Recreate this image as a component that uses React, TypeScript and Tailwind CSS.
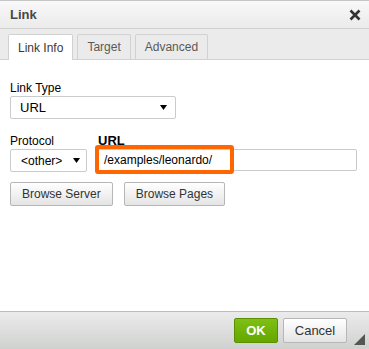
import React from "react";

const font = { fontFamily: '"Liberation Sans", Arial, sans-serif' };

function Tab({ label, active }: { label: string; active?: boolean }) {
  return (
    <div
      className={
        "px-[9px] flex items-center border border-b-0 border-[#d1d1d1] rounded-t-[2px] text-[12px] " +
        (active ? "bg-white text-[#383838] h-[26px] -mb-px" : "bg-[#ebebeb] text-[#595959] h-[25px]")
      }
    >
      {label}
    </div>
  );
}

function Btn({ label }: { label: string }) {
  return (
    <button className="h-[24px] px-[11px] border border-[#b6b6b6] rounded-[2px] bg-gradient-to-b from-white to-[#e4e4e4] text-[12px] text-[#333]">
      {label}
    </button>
  );
}

function Arrow() {
  return (
    <svg width="7" height="5" viewBox="0 0 7 5">
      <path d="M0 0 L7 0 L3.5 5 Z" fill="#000" />
    </svg>
  );
}

export default function App() {
  return (
    <div style={font} className="w-[369px] h-[349px] flex flex-col bg-white overflow-hidden">
      {/* title */}
      <div className="h-[29px] shrink-0 border-t border-[#c6c6c6] border-b border-b-[#d1d1d1] bg-gradient-to-b from-[#f8f8f8] to-[#ebebeb] flex items-center justify-between pl-[10px] pr-[8px]">
        <span className="text-[13px] font-bold text-[#474747]">Link</span>
        <svg width="12" height="12" viewBox="0 0 12 12">
          <path d="M1.5 1.5 L10.5 10.5 M10.5 1.5 L1.5 10.5" stroke="#333" strokeWidth="2.6" />
        </svg>
      </div>
      {/* tabs */}
      <div className="h-[31px] shrink-0 bg-[#ebebeb] border-b border-[#d1d1d1] flex items-end gap-[4px] pl-[8px]">
        <Tab label="Link Info" active />
        <Tab label="Target" />
        <Tab label="Advanced" />
      </div>
      {/* body */}
      <div className="flex-1 pl-[10px] pr-[12px] pt-[20px] text-[12px] text-black">
        <div className="leading-[16px]">Link Type</div>
        <div className="w-[166px] h-[23px] border border-[#c9cccf] rounded-[2px] flex items-center justify-between pl-[9px] pr-[8px]">
          <span className="text-[13px]">URL</span>
          <Arrow />
        </div>
        <div className="mt-[14px] flex gap-[9px]">
          <div>
            <div className="leading-[16px]">Protocol</div>
            <div className="w-[77px] h-[23px] border border-[#c9cccf] rounded-[2px] flex items-center justify-between pl-[10px] pr-[6px]">
              <span className="text-[12px]">&lt;other&gt;</span>
              <Arrow />
            </div>
          </div>
          <div className="flex-1 relative">
            <div className="leading-[16px] font-bold text-[13px] pl-[2px]">URL</div>
            <div className="h-[22px] border border-[#c9cccf] rounded-[2px] flex items-center pl-[7px] text-[12px]">
              /examples/leonardo/
            </div>
            <div className="absolute left-[-1px] top-[12px] w-[139px] h-[29px] border-[4px] border-[#ff6600] rounded-[3px]" />
          </div>
        </div>
        <div className="mt-[10px] flex gap-[11px]">
          <Btn label="Browse Server" />
          <Btn label="Browse Pages" />
        </div>
      </div>
      {/* footer */}
      <div className="h-[38px] shrink-0 border-t border-[#bcbcbc] bg-gradient-to-b from-[#ebebeb] to-[#cfd1cf] relative flex items-center justify-end gap-[5px] pr-[22px]">
        <button className="h-[25px] w-[44px] rounded-[2px] border border-[#5a8f00] bg-gradient-to-b from-[#7fc015] to-[#65a600] text-white font-bold text-[13px]">
          OK
        </button>
        <button className="h-[25px] w-[64px] rounded-[2px] border border-[#b6b6b6] bg-gradient-to-b from-white to-[#e4e4e4] text-[#333] text-[13px]">
          Cancel
        </button>
        <svg className="absolute right-[4px] bottom-[4px]" width="11" height="11" viewBox="0 0 11 11">
          <path d="M11 0 L11 11 L0 11 Z" fill="#555" />
        </svg>
      </div>
    </div>
  );
}
